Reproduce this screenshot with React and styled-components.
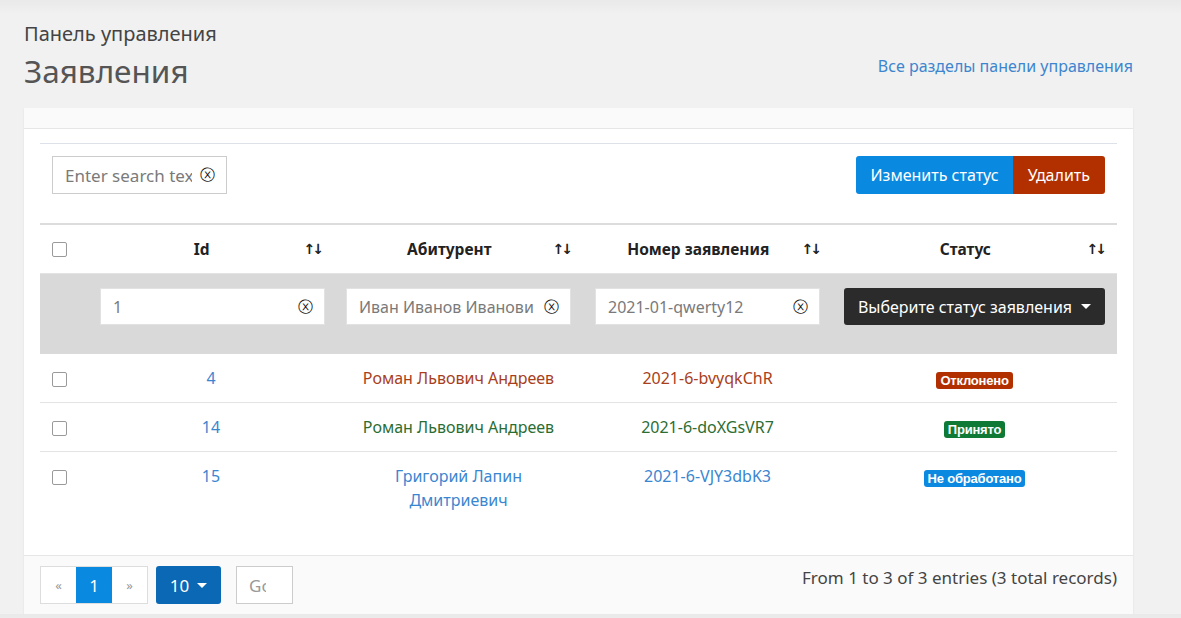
import React from 'react';
import styled, { createGlobalStyle } from 'styled-components';

const GlobalStyle = createGlobalStyle`
  * { box-sizing: border-box; }
  body {
    margin: 0;
    background: linear-gradient(#e9e9e9, #f1f1f1 14px) #f1f1f1;
    font-family: "Noto Sans", "Open Sans", sans-serif;
    color: #333;
  }
`;

const Page = styled.div`
  padding: 18px 48px 0 24px;
`;

const PageHead = styled.div`
  display: flex;
  justify-content: space-between;
  align-items: flex-end;
  height: 90px;
  padding-bottom: 16px;
`;

const Crumb = styled.div`
  font-size: 20px;
  color: #444;
  line-height: 32px;
`;

const Title = styled.h1`
  margin: 0;
  font-size: 31.5px;
  font-weight: 400;
  color: #555;
  line-height: 42px;
`;

const HeadLink = styled.a`
  color: #3d85cf;
  font-size: 16px;
  text-decoration: none;
  margin-bottom: 15px;
`;

const Card = styled.div`
  background: #fff;
  box-shadow: 0 1px 2px rgba(0, 0, 0, 0.08);
`;

const CardHead = styled.div`
  height: 21px;
  background: #fafafa;
  border-bottom: 1px solid #e6e6e6;
`;

const CardBody = styled.div`
  padding: 14px 16px 31px;
`;

const Toolbar = styled.div`
  display: flex;
  justify-content: space-between;
  align-items: center;
  border-top: 1px solid #dde2ea;
  padding: 12px 12px 29px;
`;

const SearchBox = styled.div`
  position: relative;
  width: ${p => p.$w || 175}px;
`;

const TextInput = styled.input`
  width: 100%;
  height: ${p => p.$h || 38}px;
  border: 1px solid ${p => p.$border || '#ccc'};
  padding: 0 ${p => p.$pr || 36}px 0 12px;
  font-family: inherit;
  font-size: ${p => p.$fs || 16}px;
  color: #555;
  outline: none;
  background: #fff;
  &::placeholder {
    color: #7a7a7a;
  }
`;

const ClearIcon = styled.span`
  position: absolute;
  right: 12px;
  top: 50%;
  transform: translateY(-50%);
  font-family: "DejaVu Sans", sans-serif;
  font-size: 15px;
  color: #111;
`;

const BtnGroup = styled.div`
  display: flex;
  border-radius: 3px;
  overflow: hidden;
`;

const Btn = styled.button`
  height: 38px;
  border: none;
  padding: 0 ${p => p.$px || 14}px;
  font-family: inherit;
  font-size: 16px;
  color: #fff;
  background: ${p => p.$bg};
`;

const Table = styled.div`
  border-top: 2px solid #dcdcdc;
`;

const Row = styled.div`
  display: grid;
  grid-template-columns: 48px 246px 249px 249px 1fr;
  align-items: ${p => p.$align || 'start'};
  background: ${p => p.$bg || '#fff'};
  border-bottom: ${p => (p.$last ? 'none' : '1px solid #e3e3e3')};
`;

const Cell = styled.div`
  padding: ${p => p.$pad || '12px'};
  text-align: center;
  line-height: 24px;
  font-size: 16px;
  color: ${p => p.$color || 'inherit'};
`;

const CheckCell = styled.div`
  padding: 18px 12px 0;
`;

const HeadCell = styled.div`
  display: flex;
  align-items: center;
  padding: 12px;
  height: 48px;
  font-weight: 700;
  font-size: 15.5px;
  color: #222;
`;

const HeadLabel = styled.span`
  flex: 1;
  text-align: center;
`;

const SortIcon = styled.span`
  font-family: "DejaVu Sans", sans-serif;
  font-weight: 700;
  font-size: 14px;
  letter-spacing: -3px;
  color: #222;
  padding-right: 1px;
`;

const Check = styled.span`
  display: block;
  width: 15px;
  height: 15px;
  border: 1px solid #9a9a9a;
  border-radius: 2px;
  background: #fff;
`;

const Dropdown = styled.button`
  width: 100%;
  height: 37px;
  border: none;
  border-radius: 3px;
  background: #2b2b2b;
  color: #fff;
  font-family: inherit;
  font-size: 16px;
  display: flex;
  align-items: center;
  justify-content: center;
  gap: 9px;
`;

const Caret = styled.span`
  width: 0;
  height: 0;
  border-left: 5px solid transparent;
  border-right: 5px solid transparent;
  border-top: 5px solid ${p => p.$color || '#fff'};
`;

const Badge = styled.span`
  display: inline-block;
  vertical-align: middle;
  margin-top: 2px;
  font-family: "Liberation Sans", Arial, sans-serif;
  font-weight: 700;
  font-size: 13px;
  line-height: 17px;
  padding: 0 4px;
  border-radius: 3px;
  color: #fff;
  background: ${p => p.$bg};
  letter-spacing: -0.2px;
`;

const Footer = styled.div`
  display: flex;
  align-items: flex-start;
  justify-content: space-between;
  padding: 10px 16px 10px;
  background: #fafafa;
  border-top: 1px solid #e6e6e6;
`;

const FooterLeft = styled.div`
  display: flex;
  align-items: center;
`;

const Pager = styled.div`
  display: flex;
  border: 1px solid #ddd;
  background: #fff;
`;

const PageBtn = styled.span`
  width: ${p => (p.$active ? 36 : 35)}px;
  height: 36px;
  display: flex;
  align-items: center;
  justify-content: center;
  font-size: ${p => (p.$active ? 17 : 13)}px;
  color: ${p => (p.$active ? '#fff' : '#999')};
  background: ${p => (p.$active ? '#0a89e0' : '#fff')};
`;

const SizeBtn = styled.button`
  margin-left: 8px;
  width: 65px;
  height: 38px;
  border: none;
  border-radius: 3px;
  background: #0a68b5;
  color: #fff;
  font-family: inherit;
  font-size: 17px;
  display: flex;
  align-items: center;
  justify-content: center;
  gap: 8px;
`;

const GoInput = styled.input`
  margin-left: 15px;
  width: 57px;
  height: 38px;
  border: 1px solid #ccc;
  padding: 0 26px 0 12px;
  font-family: inherit;
  font-size: 17px;
  &::placeholder {
    color: #999;
  }
`;

const Summary = styled.div`
  font-size: 17px;
  line-height: 24px;
  color: #444;
`;

const rows = [
  { id: 4, name: ['Роман Львович Андреев'], num: '2021-6-bvyqkChR', status: 'Отклонено', color: '#a8401c', badge: '#b23000' },
  { id: 14, name: ['Роман Львович Андреев'], num: '2021-6-doXGsVR7', status: 'Принято', color: '#2b6d33', badge: '#0e7a35' },
  { id: 15, name: ['Григорий Лапин', 'Дмитриевич'], num: '2021-6-VJY3dbK3', status: 'Не обработано', color: '#3a86d0', badge: '#0b89e1' },
];

const heads = ['Id', 'Абитурент', 'Номер заявления', 'Статус'];

const FilterInput = ({ placeholder }) => (
  <SearchBox $w={225}>
    <TextInput $h={37} $border="#e2e2e2" placeholder={placeholder} />
    <ClearIcon>ⓧ</ClearIcon>
  </SearchBox>
);

export default function App() {
  return (
    <>
      <GlobalStyle />
      <Page>
        <PageHead>
          <div>
            <Crumb>Панель управления</Crumb>
            <Title>Заявления</Title>
          </div>
          <HeadLink href="#">Все разделы панели управления</HeadLink>
        </PageHead>

        <Card>
          <CardHead />
          <CardBody>
            <Toolbar>
              <SearchBox>
                <TextInput $fs={17} $pr={34} placeholder="Enter search text" />
                <ClearIcon>ⓧ</ClearIcon>
              </SearchBox>
              <BtnGroup>
                <Btn $bg="#0a89e0">Изменить статус</Btn>
                <Btn $bg="#b23000" $px={15}>Удалить</Btn>
              </BtnGroup>
            </Toolbar>

            <Table>
              <Row $align="center">
                <HeadCell>
                  <Check />
                </HeadCell>
                {heads.map(h => (
                  <HeadCell key={h}>
                    <HeadLabel>{h}</HeadLabel>
                    <SortIcon>↑↓</SortIcon>
                  </HeadCell>
                ))}
              </Row>

              <Row $bg="#d9d9d9" $last>
                <Cell />
                <Cell $pad="14px 12px 29px">
                  <FilterInput placeholder="1" />
                </Cell>
                <Cell $pad="14px 12px 29px">
                  <FilterInput placeholder="Иван Иванов Иванович" />
                </Cell>
                <Cell $pad="14px 12px 29px">
                  <FilterInput placeholder="2021-01-qwerty12" />
                </Cell>
                <Cell $pad="14px 12px 29px">
                  <Dropdown>
                    Выберите статус заявления <Caret />
                  </Dropdown>
                </Cell>
              </Row>

              {rows.map((r, i) => (
                <Row key={r.id} $last={i === rows.length - 1}>
                  <CheckCell>
                    <Check />
                  </CheckCell>
                  <Cell $color="#3a86d0">{r.id}</Cell>
                  <Cell $color={r.color}>
                    {r.name.map(n => (
                      <div key={n}>{n}</div>
                    ))}
                  </Cell>
                  <Cell $color={r.color}>{r.num}</Cell>
                  <Cell>
                    <Badge $bg={r.badge}>{r.status}</Badge>
                  </Cell>
                </Row>
              ))}
            </Table>
          </CardBody>

          <Footer>
            <FooterLeft>
              <Pager>
                <PageBtn>«</PageBtn>
                <PageBtn $active>1</PageBtn>
                <PageBtn>»</PageBtn>
              </Pager>
              <SizeBtn>
                10 <Caret />
              </SizeBtn>
              <GoInput placeholder="Go" />
            </FooterLeft>
            <Summary>From 1 to 3 of 3 entries (3 total records)</Summary>
          </Footer>
        </Card>
      </Page>
    </>
  );
}
